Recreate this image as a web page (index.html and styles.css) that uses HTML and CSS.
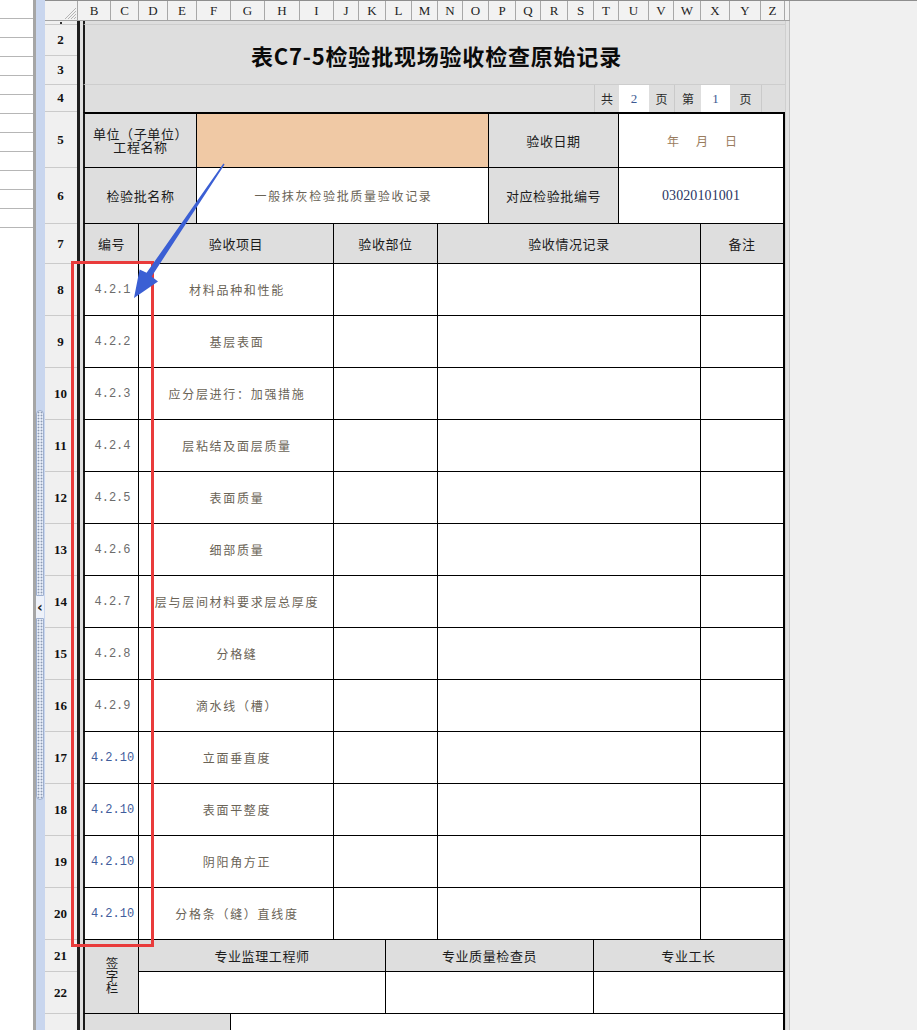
FILE: index.html
```html
<!DOCTYPE html>
<html lang="zh-CN">
<head>
<meta charset="utf-8">
<title>表C7-5检验批现场验收检查原始记录</title>
<link rel="stylesheet" href="styles.css">
</head>
<body>
<div class="app">
  <div class="navpanel">
    <div class="navrow"></div><div class="navrow"></div><div class="navrow"></div><div class="navrow"></div>
    <div class="navrow"></div><div class="navrow"></div><div class="navrow"></div><div class="navrow"></div>
    <div class="navrow"></div><div class="navrow"></div><div class="navrow"></div><div class="navrow"></div>
  </div>
  <div class="splitter">
    <div class="knob">
      <div class="knob-seg seg-top"></div>
      <div class="knob-arrow">&lsaquo;</div>
      <div class="knob-seg seg-bottom"></div>
    </div>
  </div>
  <div class="sheet">
    <div class="colhdr">
      <div class="corner"><svg width="12" height="12" viewBox="0 0 12 12"><path d="M12 1 L1 12 M12 4 L4 12 M12 7 L7 12 M12 10 L10 12" stroke="#b4b4b4" stroke-width="1" fill="none"/></svg></div>
      <div class="ch">B</div><div class="ch">C</div><div class="ch">D</div><div class="ch">E</div>
      <div class="ch">F</div><div class="ch">G</div><div class="ch">H</div><div class="ch">I</div>
      <div class="ch">J</div><div class="ch">K</div><div class="ch">L</div><div class="ch">M</div>
      <div class="ch">N</div><div class="ch">O</div><div class="ch">P</div><div class="ch">Q</div>
      <div class="ch">R</div><div class="ch">S</div><div class="ch">T</div><div class="ch">U</div>
      <div class="ch">V</div><div class="ch">W</div><div class="ch">X</div><div class="ch">Y</div>
      <div class="ch">Z</div><div class="ch ch-aa"></div>
    </div>
    <div class="grid">
      <div class="freeze"></div>
      <div class="aa"></div>

      <!-- row 1 -->
      <div class="rh rh1"><span class="dot"></span></div>
      <div class="cell gray first span-all r1line"></div>

      <!-- rows 2-3 title -->
      <div class="rh">2</div>
      <div class="cell gray first span-all title">表C7-5检验批现场验收检查原始记录</div>
      <div class="rh">3</div>

      <!-- row 4 -->
      <div class="rh">4</div>
      <div class="cell gray first r4 c-r4a"></div>
      <div class="cell gray r4 lt c-gong">共</div>
      <div class="cell white r4 c-tot pg">2</div>
      <div class="cell gray r4 c-ye1">页</div>
      <div class="cell gray r4 lt c-di">第</div>
      <div class="cell white r4 c-cur pg">1</div>
      <div class="cell gray r4 c-ye2">页</div>
      <div class="cell gray r4 lt c-r4z"></div>

      <!-- row 5 -->
      <div class="rh">5</div>
      <div class="cell tb gray first top lbl c-l1 two"><span class="ln">单位（子单位）</span><span class="ln">工程名称</span></div>
      <div class="cell tb peach top c-v1"></div>
      <div class="cell tb gray top lbl c-l2">验收日期</div>
      <div class="cell tb white top last c-v2 date"><span>年</span><span>月</span><span>日</span></div>

      <!-- row 6 -->
      <div class="rh">6</div>
      <div class="cell tb gray first lbl c-l1">检验批名称</div>
      <div class="cell tb white c-v1 item">一般抹灰检验批质量验收记录</div>
      <div class="cell tb gray lbl c-l2">对应检验批编号</div>
      <div class="cell tb white last c-v2 code">03020101001</div>

      <!-- row 7 -->
      <div class="rh">7</div>
      <div class="cell tb gray first lbl c-no">编号</div>
      <div class="cell tb gray lbl c-item">验收项目</div>
      <div class="cell tb gray lbl c-part">验收部位</div>
      <div class="cell tb gray lbl c-rec">验收情况记录</div>
      <div class="cell tb gray last lbl c-note">备注</div>

      <div class="rh">8</div>
      <div class="cell tb white first c-no num">4.2.1</div>
      <div class="cell tb white c-item item">材料品种和性能</div>
      <div class="cell tb white c-part"></div><div class="cell tb white c-rec"></div><div class="cell tb white last c-note"></div>

      <div class="rh">9</div>
      <div class="cell tb white first c-no num">4.2.2</div>
      <div class="cell tb white c-item item">基层表面</div>
      <div class="cell tb white c-part"></div><div class="cell tb white c-rec"></div><div class="cell tb white last c-note"></div>

      <div class="rh">10</div>
      <div class="cell tb white first c-no num">4.2.3</div>
      <div class="cell tb white c-item item">应分层进行：加强措施</div>
      <div class="cell tb white c-part"></div><div class="cell tb white c-rec"></div><div class="cell tb white last c-note"></div>

      <div class="rh">11</div>
      <div class="cell tb white first c-no num">4.2.4</div>
      <div class="cell tb white c-item item">层粘结及面层质量</div>
      <div class="cell tb white c-part"></div><div class="cell tb white c-rec"></div><div class="cell tb white last c-note"></div>

      <div class="rh">12</div>
      <div class="cell tb white first c-no num">4.2.5</div>
      <div class="cell tb white c-item item">表面质量</div>
      <div class="cell tb white c-part"></div><div class="cell tb white c-rec"></div><div class="cell tb white last c-note"></div>

      <div class="rh">13</div>
      <div class="cell tb white first c-no num">4.2.6</div>
      <div class="cell tb white c-item item">细部质量</div>
      <div class="cell tb white c-part"></div><div class="cell tb white c-rec"></div><div class="cell tb white last c-note"></div>

      <div class="rh">14</div>
      <div class="cell tb white first c-no num">4.2.7</div>
      <div class="cell tb white c-item item">层与层间材料要求层总厚度</div>
      <div class="cell tb white c-part"></div><div class="cell tb white c-rec"></div><div class="cell tb white last c-note"></div>

      <div class="rh">15</div>
      <div class="cell tb white first c-no num">4.2.8</div>
      <div class="cell tb white c-item item">分格缝</div>
      <div class="cell tb white c-part"></div><div class="cell tb white c-rec"></div><div class="cell tb white last c-note"></div>

      <div class="rh">16</div>
      <div class="cell tb white first c-no num">4.2.9</div>
      <div class="cell tb white c-item item">滴水线（槽）</div>
      <div class="cell tb white c-part"></div><div class="cell tb white c-rec"></div><div class="cell tb white last c-note"></div>

      <div class="rh">17</div>
      <div class="cell tb white first c-no num blue">4.2.10</div>
      <div class="cell tb white c-item item">立面垂直度</div>
      <div class="cell tb white c-part"></div><div class="cell tb white c-rec"></div><div class="cell tb white last c-note"></div>

      <div class="rh">18</div>
      <div class="cell tb white first c-no num blue">4.2.10</div>
      <div class="cell tb white c-item item">表面平整度</div>
      <div class="cell tb white c-part"></div><div class="cell tb white c-rec"></div><div class="cell tb white last c-note"></div>

      <div class="rh">19</div>
      <div class="cell tb white first c-no num blue">4.2.10</div>
      <div class="cell tb white c-item item">阴阳角方正</div>
      <div class="cell tb white c-part"></div><div class="cell tb white c-rec"></div><div class="cell tb white last c-note"></div>

      <div class="rh">20</div>
      <div class="cell tb white first c-no num blue">4.2.10</div>
      <div class="cell tb white c-item item">分格条（缝）直线度</div>
      <div class="cell tb white c-part"></div><div class="cell tb white c-rec"></div><div class="cell tb white last c-note"></div>

      <!-- rows 21-22 signature -->
      <div class="rh">21</div>
      <div class="cell tb gray first lbl c-no sign"><span class="vtext">签字栏</span></div>
      <div class="cell tb gray lbl c-s1">专业监理工程师</div>
      <div class="cell tb gray lbl c-s2">专业质量检查员</div>
      <div class="cell tb gray last lbl c-s3">专业工长</div>

      <div class="rh">22</div>
      <div class="cell tb white c-s1"></div>
      <div class="cell tb white c-s2"></div>
      <div class="cell tb white last c-s3"></div>

      <!-- row 23 -->
      <div class="rh"></div>
      <div class="cell tb gray first c-r23a"></div>
      <div class="cell tb white last c-r23b"></div>
    </div>
  </div>
  <div class="blank"></div>

  <div class="overlay">
    <div class="redbox"></div>
    <svg class="arrow" width="917" height="1030" viewBox="0 0 917 1030">
      <polygon points="224.6,164.4 151.6,276.4 158.0,281.5 134,298 139.6,269.5 146.6,272.8 223.4,163.6" fill="#3b5fd4"/>
    </svg>
  </div>
</div>
</body>
</html>
```

FILE: styles.css
```css
* { box-sizing: border-box; }

html, body {
  margin: 0;
  padding: 0;
}

body {
  width: 917px;
  height: 1030px;
  overflow: hidden;
  background: #f0f0f0;
  font-family: "Noto Sans CJK SC", "Noto Sans", sans-serif;
}

.app {
  position: relative;
  display: flex;
  width: 917px;
  height: 1030px;
  overflow: hidden;
}

/* left navigation list */
.navpanel {
  width: 33px;
  flex: none;
  background: #ffffff;
}

.navrow {
  height: 19px;
  border-bottom: 1px solid #b6b6b6;
}

/* splitter bar */
.splitter {
  width: 12px;
  flex: none;
  background: #c9d6ee;
  border-left: 3px solid #a6a6a6;
  padding-top: 410px;
}

.knob {
  width: 8px;
  display: flex;
  flex-direction: column;
}

.knob-seg {
  border: 1px solid #9fb0cf;
  background-color: #e6ecf7;
  background-image: radial-gradient(circle, #8d9ab2 0.8px, transparent 1.1px);
  background-size: 3px 3px;
  background-position: 0 0;
}

.seg-top {
  height: 186px;
  border-radius: 4px 4px 1px 1px;
}

.seg-bottom {
  height: 182px;
  border-radius: 1px 1px 4px 4px;
}

.knob-arrow {
  height: 22px;
  background: #eef2fa;
  font-family: "DejaVu Sans", sans-serif;
  font-size: 14px;
  font-weight: bold;
  line-height: 22px;
  color: #202020;
  text-align: center;
}

/* sheet */
.sheet {
  width: 745px;
  flex: none;
  display: flex;
  flex-direction: column;
}

.colhdr {
  flex: none;
  display: grid;
  grid-template-columns: 33px 33px 28px 29px 29px 34px 34px 35px 34px 25px 27px 26px 26px 25px 26px 27px 25px 27px 26px 25px 30px 25px 27px 29px 31px 24px 5px;
  height: 21px;
  background: #f2f2f2;
  border-top: 1px solid #8e8e8e;
  border-bottom: 1px solid #a4a4a4;
}

.corner {
  display: flex;
  align-items: flex-end;
  justify-content: flex-end;
  border-right: 1px solid #a8a8a8;
  padding: 0 1px 1px 0;
}

.corner svg { display: block; }

.ch {
  border-right: 1px solid #a8a8a8;
  display: flex;
  align-items: center;
  justify-content: center;
  font-family: "Liberation Serif", serif;
  font-size: 13px;
  color: #1e1e1e;
}

.ch-aa { border-right: 1px solid #b0b0b0; }

.grid {
  display: grid;
  grid-template-columns: 32px 6px 28px 28px 29px 29px 34px 34px 35px 34px 25px 27px 26px 26px 25px 26px 27px 25px 27px 26px 25px 30px 25px 27px 29px 31px 24px 5px;
  grid-template-rows: 4px 31px 29px 27px 56px 56px 40px repeat(13, 52px) 32px 42px 40px;
  flex: none;
}

.freeze {
  grid-column: 2 / 3;
  grid-row: 1 / 24;
  background: linear-gradient(to right, #1f1f1f 0 3px, #e0e0e0 3px 6px);
}

.aa {
  grid-column: 28 / 29;
  grid-row: 1 / 24;
  background: #e2e2e2;
  border-left: 1px solid #cfcfcf;
  border-right: 1px solid #c2c2c2;
}

/* row headers */
.rh {
  grid-column: 1 / 2;
  background: #f0f0f0;
  border-bottom: 1px solid #cbcbcb;
  display: flex;
  align-items: center;
  justify-content: center;
  font-family: "Liberation Serif", serif;
  font-weight: bold;
  font-size: 13px;
  color: #111;
  padding-right: 1px;
}

.rh1 {
  align-items: flex-start;
}

.dot {
  display: block;
  width: 2px;
  height: 2px;
  margin-top: 1px;
  background: #333;
}

/* cells */
.cell {
  display: flex;
  align-items: center;
  justify-content: center;
  text-align: center;
  min-width: 0;
  overflow: hidden;
  white-space: nowrap;
}

.gray { background: #dedede; }
.white { background: #ffffff; }
.peach { background: #f0c9a5; }

.tb {
  border-right: 1px solid #000;
  border-bottom: 1px solid #000;
}

.first { border-left: 2px solid #1a1a1a; }
.top { border-top: 2px solid #000; }
.last { border-right: 2px solid #000; }

.span-all { grid-column: 3 / 28; }

.r1line { border-bottom: 1px solid #cdcdcd; }

.title {
  grid-row: span 2;
  font-size: 22px;
  font-weight: bold;
  color: #0a0a0a;
  letter-spacing: 0.8px;
  border-bottom: 1px solid #cdcdcd;
  padding-left: 3px;
}

.r4 {
  font-size: 12px;
  color: #2a2a2a;
}

.lt { border-left: 1px solid #cacaca; }

.c-r4a { grid-column: 3 / 21; }
.c-gong { grid-column: 21 / 22; }
.c-tot { grid-column: 22 / 23; }
.c-ye1 { grid-column: 23 / 24; }
.c-di { grid-column: 24 / 25; }
.c-cur { grid-column: 25 / 26; }
.c-ye2 { grid-column: 26 / 27; }
.c-r4z { grid-column: 27 / 28; }

.pg {
  font-family: "Liberation Serif", serif;
  font-size: 13px;
  color: #3d5a92;
}

.c-l1 { grid-column: 3 / 7; }
.c-v1 { grid-column: 7 / 17; }
.c-l2 { grid-column: 17 / 22; }
.c-v2 { grid-column: 22 / 28; }

.c-no { grid-column: 3 / 5; }
.c-item { grid-column: 5 / 11; }
.c-part { grid-column: 11 / 15; }
.c-rec { grid-column: 15 / 25; }
.c-note { grid-column: 25 / 28; }

.c-s1 { grid-column: 5 / 13; }
.c-s2 { grid-column: 13 / 21; }
.c-s3 { grid-column: 21 / 28; }

.c-r23a { grid-column: 3 / 8; }
.c-r23b { grid-column: 8 / 28; }

.lbl {
  font-size: 13px;
  line-height: 13px;
  letter-spacing: 0.6px;
  color: #1c1c1c;
}

.two {
  flex-direction: column;
}

.ln {
  display: block;
  height: 12.5px;
  line-height: 12.5px;
}

.item {
  font-size: 12px;
  letter-spacing: 1.7px;
  color: #6a6356;
  padding-left: 2px;
}

.num {
  font-family: "Liberation Mono", monospace;
  font-size: 12px;
  color: #6c6c6c;
  padding-left: 2px;
}

.num.blue { color: #3f5d9c; }

.code {
  font-family: "Liberation Serif", serif;
  font-size: 14px;
  color: #2b3563;
  letter-spacing: 0.1px;
}

.date {
  gap: 17px;
  font-size: 12px;
  color: #9a7c5e;
  padding-left: 2px;
}

.sign {
  grid-row: span 2;
  padding-bottom: 2px;
}

.vtext {
  writing-mode: vertical-rl;
  text-orientation: upright;
  font-size: 12.5px;
  letter-spacing: 0;
  line-height: 14px;
}

/* right empty area */
.blank {
  flex: 1;
  background: #f0f0f0;
  border-top: 1px solid #8e8e8e;
}

/* annotation overlay */
.overlay {
  position: absolute;
  left: 0;
  top: 0;
  width: 917px;
  height: 1030px;
  pointer-events: none;
}

.redbox {
  position: absolute;
  left: 71px;
  top: 261px;
  width: 83px;
  height: 686px;
  border: 3px solid #e93b3b;
}

.arrow {
  position: absolute;
  left: 0;
  top: 0;
}
```
